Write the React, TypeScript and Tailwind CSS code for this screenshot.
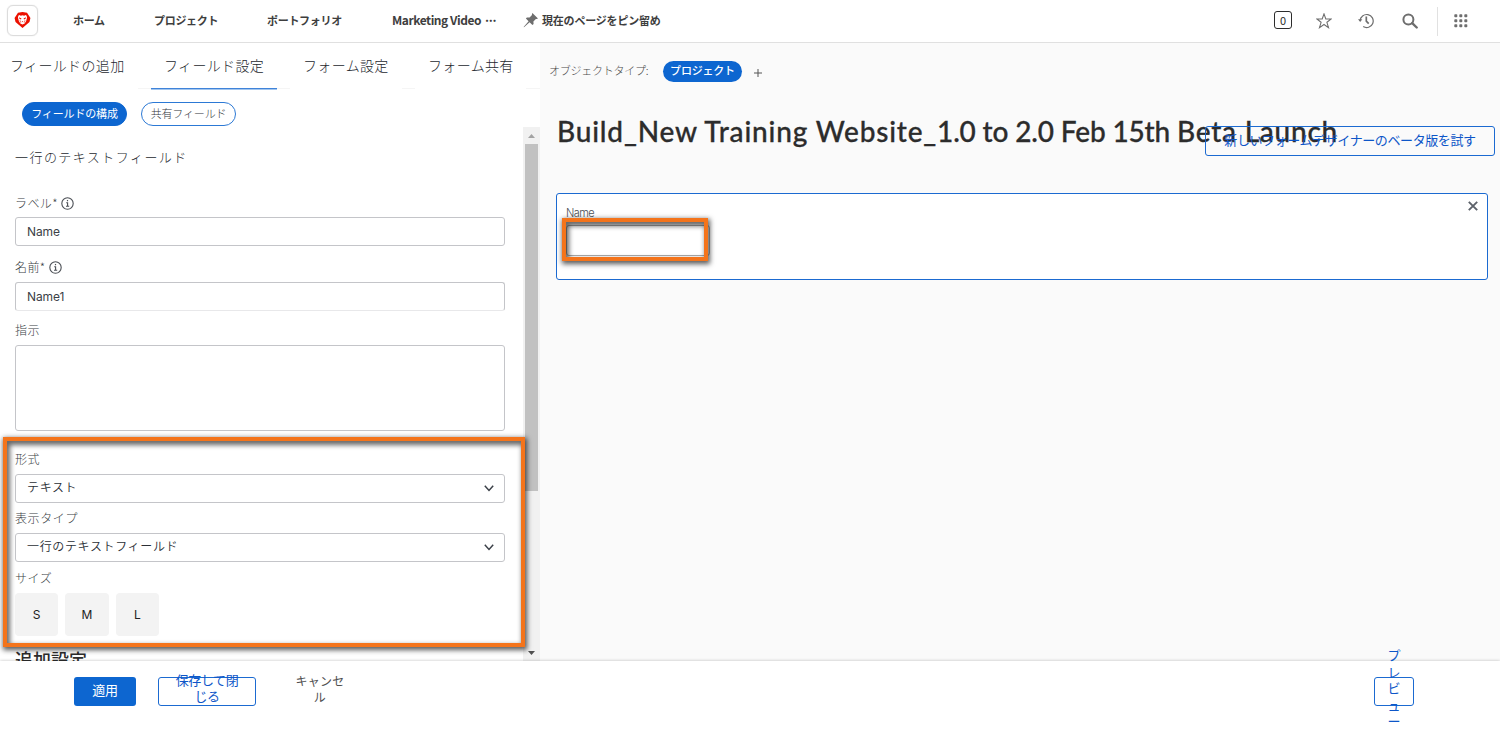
import React from "react";

function InfoIcon() {
  return (
    <svg width="13" height="13" viewBox="0 0 13 13" fill="none" stroke="#4b4f55" strokeWidth="1.1">
      <circle cx="6.5" cy="6.500" r="5.700" />
      <path d="M5.200 5.700H6.600V9.200M5 9.300H8.200" />
      <path d="M5.900 3.600H7.100" strokeWidth="1.300" />
    </svg>
  );
}

function LionLogo() {
  return (
    <svg width="17" height="18" viewBox="0 0 18 18">
      <path d="M4.200 1.300 9 .5l4.800.8L17.400 7l-1 4.200-3.700 3.200L9 17.600l-3.700-3.200-3.700-3.200-1-4.200z" fill="#eb1000" />
      <path d="M4.600 4.400 5.800 3.700 7.200 4.500 9 4l1.800.5 1.400-.8 1.200.7.400 2.200-1 3.600-1.500 2.500L9 13.800l-2.300-1.100-1.500-2.500-1-3.600z" fill="#fff" />
      <path d="m5.400 6.200 2.500 1.200-.5 1-1.700-.8zM12.600 6.200l-2.500 1.200.5 1 1.700-.8zM8 10.400h2l-1 1z" fill="#eb1000" />
      <path d="m6.300 9.200.9 2.700M11.700 9.200l-.9 2.700" stroke="#eb1000" strokeWidth=".6" />
    </svg>
  );
}

function Header() {
  return (
    <header className="flex h-[43px] w-full shrink-0 items-center border-b border-[#e0e0e0] bg-white text-[11px] font-bold leading-4 text-[#3e3e3e]">
      <div className="-mt-0.5 ml-[7px] flex h-[31px] w-[31px] items-center justify-center rounded-md border border-[#dcdcdc] shadow-[0_0_1px_#ccc]">
        <LionLogo />
      </div>
      <nav className="-mt-0.5 flex items-center whitespace-nowrap">
        <span className="ml-[35px] w-[81px] tracking-[-0.3px]">ホーム</span>
        <span className="w-[113px] tracking-[-0.3px]">プロジェクト</span>
        <span className="w-[125px] tracking-[-0.3px]">ポートフォリオ</span>
        <span className="w-[131px] text-[12px] tracking-[-0.45px]">Marketing Video <span className="tracking-[-3.300px]">···</span></span>
        <svg width="16" height="16" viewBox="0 0 16 16" className="mr-[3px]">
          <path d="M9.400 1 15 6.600l-1.300.5-.8-.1-2.500 2.500.2 2.600-1.200 1L6.600 10.300 1 15.300.6 15l5-5.700L2.900 6.600l1-1.200 2.600.2L9 3.100 8.900 2.300z" fill="#6e6e6e" />
        </svg>
        <span className="tracking-[-0.2px]">現在のページをピン留め</span>
      </nav>
      <div className="ml-auto flex h-full items-center text-[#6e6e6e]">
        <div className="-mt-0.5 mr-6 flex h-[18px] w-[18px] items-center justify-center rounded-[3px] border-[1.5px] border-[#2c2c2c] text-[11px] font-normal text-[#2c2c2c]">0</div>
        <svg width="16" height="16" viewBox="0 0 16 16" className="mr-[27px]" fill="none" stroke="#6e6e6e" strokeWidth="1.100">
          <path d="M8 .9 9.800 5.900l5.400.1-4.300 3.300 1.600 5.300L8 11.500l-4.500 3.100 1.600-5.300L.8 6l5.400-.1z" />
        </svg>
        <svg width="16" height="16" viewBox="0 0 16 16" className="-ml-px mr-7" fill="none" stroke="#6e6e6e" strokeWidth="1.200">
          <path d="M2.200 8A6.500 6.500 0 1 1 5.200 13.500M3.200 4.300A6.500 6.500 0 0 0 2.200 8" />
          <path d="M0 6.300h4.300L2.200 9z" fill="#6e6e6e" stroke="none" />
          <path d="M8.300 3.500v4.700l2.400 2.400" strokeWidth="1.700" />
        </svg>
        <svg width="16" height="16" viewBox="0 0 16 16" className="mr-[19px]" fill="none" stroke="#6e6e6e" strokeWidth="2">
          <circle cx="6.400" cy="6.400" r="5" />
          <path d="m10.200 10.200 4.500 4.300" strokeWidth="2.400" strokeLinecap="round" />
        </svg>
        <div className="mr-4 h-[29px] w-px bg-[#e1e1e1]" />
        <svg width="14" height="14" viewBox="0 0 14 14" className="mr-8" fill="#6e6e6e">
          {[0, 5, 10].map((y) => [0, 5, 10].map((x) => <rect key={`${x}-${y}`} x={x + 0.3} y={y + 0.3} width="3" height="3" rx=".8" />))}
        </svg>
      </div>
    </header>
  );
}

function Label({ children, className = "" }: { children: React.ReactNode; className?: string }) {
  return <div className={`flex h-[18px] shrink-0 items-center text-[12px] font-light leading-[18px] tracking-[0.600px] text-[#3b3f45] ${className}`}>{children}</div>;
}

function Input({ children, className = "" }: { children: React.ReactNode; className?: string }) {
  return (
    <div className={`flex h-[29px] w-[490px] shrink-0 items-center rounded-[3px] border border-[#c4c5c9] px-[11px] font-[Inter,'Noto_Sans_CJK_JP',sans-serif] text-[12px] tracking-[-0.100px] text-[#3b3f46] ${className}`}>
      {children}
    </div>
  );
}

function Select({ children, className = "" }: { children: React.ReactNode; className?: string }) {
  return (
    <div className={`flex h-[29px] w-[490px] shrink-0 items-center justify-between rounded-[3px] border border-[#c4c5c9] pl-[11px] pr-2.5 text-[12px] font-[350] tracking-[0.650px] text-[#2b2f36] ${className}`}>
      <span className="-mt-[3px]">{children}</span>
      <svg width="10" height="7" viewBox="0 0 10 7" fill="none" stroke="#3b4048" strokeWidth="1.500"><path d="m.8.8 4.200 4.600L9.200.8" /></svg>
    </div>
  );
}

function FieldForm() {
  return (
    <div className="relative flex h-[534px]">
      <div className="flex h-full w-[524px] flex-col overflow-hidden pl-[15px]">
        <h2 className="mt-[19px] h-[24px] shrink-0 text-[13px] font-light leading-[22px] tracking-[1.450px] text-[#24282e]">一行のテキストフィールド</h2>
        <Label className="mt-[24px]"><span className="mr-[3px] tracking-[0.400px]">ラベル*</span><InfoIcon /></Label>
        <Input className="mt-[5px]">Name</Input>
        <Label className="mt-[12px]"><span className="mr-[3px] tracking-[0.400px]">名前*</span><InfoIcon /></Label>
        <Input className="mt-[6px] border-b-[#e8e8ea]">Name1</Input>
        <Label className="mt-[10px]">指示</Label>
        <div className="mt-[6px] h-[86px] w-[490px] shrink-0 rounded-[3px] border border-[#c4c5c9]" />
        <Label className="mt-[19px]">形式</Label>
        <Select className="mt-[6px]">テキスト</Select>
        <Label className="mt-[6px]">表示タイプ</Label>
        <Select className="mt-[6px]">一行のテキストフィールド</Select>
        <Label className="mt-[7px]">サイズ</Label>
        <div className="mt-[6px] flex shrink-0 gap-[7px] font-[Inter,sans-serif] text-[12px] text-[#222]">
          <span className="flex h-[43px] w-[43px] items-center justify-center rounded-sm bg-[#f3f3f3]">S</span>
          <span className="flex h-[43px] w-[44px] items-center justify-center rounded-sm bg-[#f3f3f3]">M</span>
          <span className="flex h-[43px] w-[43px] items-center justify-center rounded-sm bg-[#f3f3f3]">L</span>
        </div>
        <h3 className="mt-[11px] h-6 shrink-0 text-[18px] font-medium leading-6 text-[#2c2c2c]">追加設定</h3>
      </div>
      <div className="-ml-px flex h-full w-[17px] flex-col items-start bg-[#f1f1f1] pl-0.5">
        <svg width="7" height="4" viewBox="0 0 7 4" className="ml-[3px] mt-[7px]"><path d="M0 4 3.500 0 7 4z" fill="#a3a3a3" /></svg>
        <div className="mt-1.5 h-[347px] w-[13px] bg-[#c1c1c1]" />
        <svg width="7" height="4" viewBox="0 0 7 4" className="mb-[6px] ml-[3px] mt-auto"><path d="M0 0h7L3.500 4z" fill="#505050" /></svg>
      </div>
      <div className="pointer-events-none absolute left-[3px] top-[310px] h-[210px] w-[522px] border-4 border-[#f4741b] shadow-[1px_2px_5px_1px_rgba(0,0,0,.65),inset_2px_3px_5px_1px_rgba(0,0,0,.6)]" />
    </div>
  );
}

function SettingsPanel() {
  return (
    <section className="flex w-[540px] shrink-0 flex-col bg-white">
      <div className="flex h-[46px] text-[14px] font-light leading-[44px] tracking-[0.350px] text-[#24282e]">
        <span className="w-[138px] whitespace-nowrap pl-[10px]">フィールドの追加</span>
        <span className="w-[13px] border-b border-[#f5f5f5]" />
        <span className="w-[126px] whitespace-nowrap border-b border-[#3f83d9] pl-[13px] shadow-[0_1px_0_#a3c6ef]">フィールド設定</span>
        <span className="w-[13px] border-b border-[#f5f5f5]" />
        <span className="w-[112px] whitespace-nowrap pl-[13px]">フォーム設定</span>
        <span className="w-[13px] border-b border-[#f5f5f5]" />
        <span className="w-[111px] whitespace-nowrap pl-[13px]">フォーム共有</span>
        <span className="flex-1 border-b border-[#f5f5f5]" />
      </div>
      <div className="flex h-[38px] gap-[14px] pl-[22px] pt-[13px] text-[11px] leading-[21px] tracking-[-0.150px]">
        <span className="h-6 w-[105px] whitespace-nowrap rounded-full border border-[#0d66d0] bg-[#0d66d0] text-center text-white">フィールドの構成</span>
        <span className="h-6 w-[95px] whitespace-nowrap rounded-full border border-[#2c79d5] text-center font-light text-[#32363c]">共有フィールド</span>
      </div>
      <FieldForm />
    </section>
  );
}

function Preview() {
  return (
    <section className="relative flex flex-1 flex-col bg-[#fafafa]">
      <div className="mt-[18px] flex h-[21px] items-center pl-[9px]">
        <span className="-mt-0.5 w-[114px] whitespace-nowrap text-[11px] font-light tracking-[-0.250px] text-[#4a4a4a]">オブジェクトタイプ:</span>
        <span className="flex h-[21px] w-[79px] items-center justify-center whitespace-nowrap rounded-full bg-[#0d66d0] pb-0.5 text-[11px] font-medium tracking-[-0.200px] text-white">プロジェクト</span>
        <svg width="8" height="8" viewBox="0 0 8 8" className="ml-3 mt-0.5"><path d="M4 0v8M0 4h8" stroke="#555" /></svg>
      </div>
      <h1 className="mt-[31px] h-[36px] whitespace-nowrap pl-[17px] font-[Lato,sans-serif] text-[28px] font-medium leading-[36px] text-[#2c2c2c] [-webkit-text-stroke:0.300px_#2c2c2c]">
        <span className="tracking-[0.820px]">Build_New Training Website_</span>
        <span className="tracking-[-0.150px]">1.0 to 2.0 Feb 15th </span>
        <span className="tracking-[0.750px]">Beta Launch</span>
      </h1>
      <button className="absolute left-[665px] top-[83px] h-[30px] w-[290px] whitespace-nowrap rounded-[3px] border border-[#1b6ad1] pb-[3px] text-[13px] tracking-[-0.400px] text-[#0d56c8]">新しいフォームデザイナーのベータ版を試す</button>
      <div className="ml-4 mt-[44px] h-[87px] w-[932px] rounded-[3px] border border-[#1b6ad1] bg-white">
        <div className="flex h-[28px] justify-between pl-[9px] pr-[9px]">
          <span className="mt-[11px] font-[Inter,sans-serif] text-[11px] font-light leading-4 tracking-[-0.600px] text-[#4b4f55]">Name</span>
          <svg width="10" height="10" viewBox="0 0 10 10" className="mt-[7px]"><path d="m.8.8 8.400 8.400M9.200.8.8 9.200" stroke="#5d626a" strokeWidth="1.900" /></svg>
        </div>
        <div className="relative ml-[9px] mt-[3px] h-[31px] w-[144px] rounded-[3px] border border-[#aaa]">
          <div className="pointer-events-none absolute -left-[5px] -top-[8px] h-[43px] w-[146px] border-4 border-[#f4741b] shadow-[1px_2px_5px_1px_rgba(0,0,0,.65),inset_2px_3px_5px_1px_rgba(0,0,0,.6)]" />
        </div>
      </div>
    </section>
  );
}

function Footer() {
  return (
    <footer className="relative flex h-[69px] items-start bg-white pt-4 text-[13px] leading-4 shadow-[0_0_3px_rgba(0,0,0,.25)]">
      <button className="ml-[74px] h-[29px] w-[62px] rounded-[3px] bg-[#0d66d0] pb-[3px] tracking-[-0.300px] text-white">適用</button>
      <button className="ml-[22px] flex h-[29px] w-[98px] items-center justify-center rounded-[3px] border border-[#1b6ad1] pb-[7px] tracking-[-0.400px] text-[#0d56c8]"><span className="w-[68px]">保存して閉<br />じる</span></button>
      <button className="-mt-1 ml-[37px] w-[54px] text-[12px] leading-4 tracking-[0.300px] text-[#505050]">キャンセル</button>
      <button className="ml-auto mr-[86px] flex h-[29px] w-10 items-center justify-center rounded-[3px] border border-[#1b6ad1] pb-[6px] leading-[16.500px] text-[#0d56c8]"><span className="w-[13px] [line-break:anywhere] [word-break:break-all]">プレビュー</span></button>
    </footer>
  );
}

export default function App() {
  return (
    <div className="flex h-[730px] w-[1500px] flex-col overflow-hidden bg-white font-['Noto_Sans_CJK_JP',sans-serif]">
      <Header />
      <main className="flex h-[618px] shrink-0">
        <SettingsPanel />
        <Preview />
      </main>
      <Footer />
    </div>
  );
}
